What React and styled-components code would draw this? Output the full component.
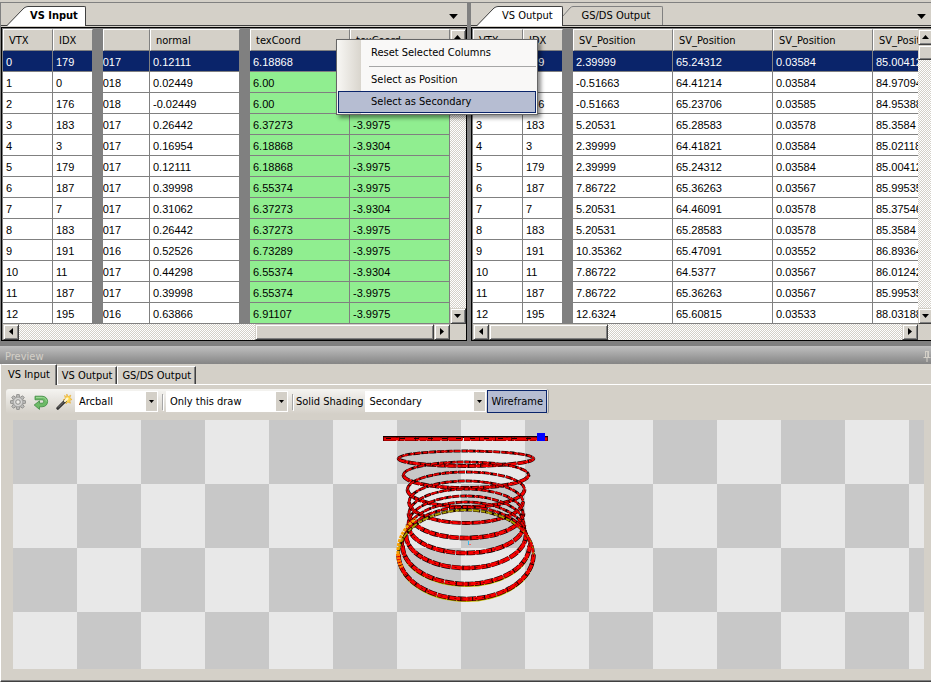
import React from "react";
import styled, { createGlobalStyle, css } from "styled-components";

const UI_FONT = '"DejaVu Sans Condensed", "DejaVu Sans", sans-serif';
const GRID_FONT = '"Liberation Sans", Arial, sans-serif';

const face = "#d4d0c8";
const shadow = "#808080";
const navy = "#0a246a";

const GlobalStyle = createGlobalStyle`
  *, *::before, *::after { box-sizing: border-box; }
  body { margin: 0; background: ${face}; overflow: hidden; }
  button, select { font: inherit; color: inherit; margin: 0; }
`;

const Page = styled.div`
  display: flex;
  flex-direction: column;
  min-height: 100vh;
  padding-top: 2px;
  overflow: hidden;
  background: ${face};
  color: #000;
  font-family: ${UI_FONT};
  font-size: 11px;
  line-height: 14px;
`;

const Docks = styled.div`
  display: grid;
  grid-template-columns: minmax(0, 467fr) minmax(0, 464fr);
  column-gap: 4px;
  width: calc(100% + 4px);
  border-top: 1px solid ${shadow};
  background: ${shadow};
`;

const Dock = styled.section`
  position: relative;
  display: flex;
  flex-direction: column;
  min-width: 0;
  padding-left: ${(p) => (p.$inset ? "1px" : "0")};
`;

const TabStrip = styled.div`
  display: flex;
  align-items: flex-end;
  height: 24px;
  padding: 0 9px 1px 6px;
  background: linear-gradient(#404040, #404040) 0 22px / 100% 1px no-repeat, ${face};
`;

const DocTab = styled.button`
  display: flex;
  padding: 0;
  border: 0;
  background: none;
  font-weight: ${(p) => (p.$bold ? "bold" : "normal")};
  margin-bottom: ${(p) => (p.$active ? "0" : "1px")};
  height: ${(p) => (p.$active ? "20px" : "19px")};
`;

const DocTabBody = styled.span`
  height: 100%;
  padding: 2px ${(p) => (p.$active ? (p.$bold ? "7px" : "9px") : "12px")} 0 ${(p) => (p.$active ? (p.$bold ? "2px" : "4px") : "9px")};
  border-top: 1px solid ${(p) => (p.$active ? "#404040" : shadow)};
  border-right: 1px solid ${(p) => (p.$active ? "#404040" : shadow)};
  border-top-right-radius: 2px;
  background: ${(p) => (p.$active ? "#fff" : face)};
  white-space: nowrap;
`;

const TabListButton = styled.button`
  display: flex;
  align-self: center;
  margin-left: auto;
  padding: 3px 0 0;
  border: 0;
  background: none;
`;

const GridFrame = styled.div`
  display: grid;
  grid-template-columns: minmax(0, 1fr) 16px;
  border: 1px solid #000;
  background: ${shadow};
  padding: 1px 0 0 1px;
`;

const GridView = styled.div`
  overflow: hidden;
`;

const DataTable = styled.table`
  width: ${(p) => p.$width}px;
  table-layout: fixed;
  border-collapse: separate;
  border-spacing: 0;
`;

const HeadCell = styled.th`
  height: 22px;
  padding: 2px 0 0 5px;
  overflow: hidden;
  border-top: 1px solid #fff;
  border-bottom: 1px solid ${shadow};
  border-left: 1px solid #fff;
  border-right: 1px solid ${shadow};
  background: ${face};
  font-weight: normal;
  text-align: left;
  white-space: nowrap;
  ${(p) => p.$gap && css`
    padding: 0;
    border-color: ${shadow};
    background: ${shadow};
  `}
`;

const Cell = styled.td`
  height: 21px;
  padding: 1px 0 0 3px;
  overflow: hidden;
  border-right: 1px solid ${shadow};
  border-bottom: 1px solid ${shadow};
  background: ${(p) => (p.$selected ? navy : p.$marked ? "#90ee90" : "#fff")};
  color: ${(p) => (p.$selected ? "#fff" : "#000")};
  font-family: ${GRID_FONT};
  font-size: 11px;
  white-space: nowrap;
  ${(p) => p.$gap && css`
    padding: 0;
    background: ${shadow};
  `}
  ${(p) => p.$clipped && css`
    padding-left: 0;
  `}
`;

const Clip = styled.span`
  display: flex;
  justify-content: flex-end;
  width: 18px;
  overflow: hidden;
`;

const track = css`
  background: conic-gradient(#fff 25%, ${face} 0 50%, #fff 0 75%, ${face} 0) 0 0 / 2px 2px;
`;

const VScroll = styled.div`
  display: flex;
  flex-direction: column;
  ${track}
`;

const HScroll = styled.div`
  display: flex;
  height: 16px;
  ${track}
`;

const raised = css`
  border: 1px solid;
  border-color: ${face} #404040 #404040 ${face};
  box-shadow: inset 1px 1px #fff, inset -1px -1px ${shadow};
  background: ${face};
`;

const ScrollButton = styled.button`
  display: flex;
  flex: none;
  align-items: center;
  justify-content: center;
  width: 16px;
  height: 16px;
  padding: 0 1px 1px 0;
  ${raised}
`;

const Thumb = styled.div`
  flex: 0 0 ${(p) => p.$size}px;
  ${raised}
`;

const Space = styled.div`
  flex: 1;
`;

const Corner = styled.div`
  background: ${face};
`;

const Menu = styled.div`
  position: absolute;
  top: 36px;
  right: -71px;
  z-index: 2;
  width: 202px;
  padding: 2px 1px 1px;
  border: 1px solid #666;
  background: linear-gradient(90deg, #f8f7f4, #d9d5cd 24px, #f9f8f7 24px);
  box-shadow: 3px 3px 4px rgba(0, 0, 0, 0.45);
`;

const MenuItem = styled.button`
  display: block;
  width: 100%;
  height: 22px;
  padding: 0 0 1px 32px;
  border: 1px solid ${(p) => (p.$active ? navy : "transparent")};
  background: ${(p) => (p.$active ? "#b6bdd2" : "none")};
  text-align: left;
`;

const MenuRule = styled.div`
  height: 1px;
  margin: 2px 0 2px 31px;
  background: #a6a6a6;
`;

const PreviewTitle = styled.header`
  display: flex;
  align-items: center;
  justify-content: space-between;
  height: 23px;
  padding: 3px 0 0 5px;
  border-top: 5px solid ${shadow};
  background: linear-gradient(#c0c0c0, #858585);
  color: ${face};
`;

const Preview = styled.section`
  display: flex;
  flex: 1;
  flex-direction: column;
  border-left: 1px solid #fff;
  border-bottom: 1px solid #404040;
  box-shadow: inset 0 -1px ${shadow};
  padding-bottom: 12px;
`;

const PreviewTabs = styled.div`
  display: flex;
  align-items: flex-end;
  height: 21px;
  border-bottom: 1px solid #fff;
`;

const PreviewTab = styled.button`
  height: ${(p) => (p.$active ? "21px" : "18px")};
  margin-bottom: ${(p) => (p.$active ? "-1px" : "0")};
  padding: 0 ${(p) => (p.$active ? "6px" : "4px")} 0 ${(p) => (p.$active ? "6px" : "4px")};
  border: 0;
  border-top: 1px solid #fff;
  border-right: 1px solid #404040;
  border-left: 1px solid ${(p) => (p.$active ? face : "#fff")};
  box-shadow: inset -1px 0 ${shadow};
  background: ${face};
  white-space: nowrap;
`;

const Toolbar = styled.div`
  display: flex;
  align-items: center;
  align-self: flex-start;
  height: 25px;
  margin: 4px 0 6px 5px;
  padding-right: 1px;
  border-right: 1px solid #999;
  border-radius: 3px;
  background: linear-gradient(#f5f4f1, ${face});
`;

const ToolButton = styled.button`
  display: flex;
  align-items: center;
  justify-content: center;
  width: 23px;
  height: 22px;
  padding: 0;
  border: 0;
  background: none;
`;

const Field = styled.label`
  display: flex;
  align-items: center;
  height: 22px;
  gap: 2px;
`;

const Combo = styled.span`
  display: grid;
  grid-template-columns: 1fr 11px;
  width: ${(p) => p.$width}px;
  height: 21px;
  padding: 1px 1px 1px 0;
  background: #fff;
`;

const ComboSelect = styled.select`
  grid-area: 1 / 1 / 2 / 3;
  appearance: none;
  width: 100%;
  padding: 0 12px 0 4px;
  border: 0;
  background: none;
`;

const ComboArrow = styled.span`
  grid-area: 1 / 2;
  display: flex;
  align-items: center;
  justify-content: center;
  background: ${face};
  pointer-events: none;
`;

const Divider = styled.span`
  width: 1px;
  height: 16px;
  margin: 0 3px 0 4px;
  background: #a6a6a6;
  box-shadow: 1px 1px #fff;
`;

const ToggleButton = styled.button`
  height: 23px;
  margin-left: 1px;
  padding: 0 3px;
  border: 1px solid ${navy};
  background: #b6bdd2;
`;

const Canvas = styled.div`
  display: flex;
  flex: 1;
  justify-content: center;
  min-height: 200px;
  margin: 0 7px 0 12px;
  background: conic-gradient(#e8e8e8 25%, #c8c8c8 0 50%, #e8e8e8 0 75%, #c8c8c8 0) 0 0 / 128px 128px;
`;

const POINTS = {
  up: "0,4 3.5,0 7,4",
  down: "0,0 7,0 3.5,4",
  left: "4,0 4,7 0,3.5",
  right: "0,0 4,3.5 0,7",
};

function Arrow({ dir, size = 7 }) {
  const flat = dir === "up" || dir === "down";
  const thin = size === 5 ? 3 : size === 9 ? 5 : 4;
  return (
    <svg
      width={flat ? size : thin}
      height={flat ? thin : size}
      viewBox={flat ? "0 0 7 4" : "0 0 4 7"}
      aria-hidden="true"
    >
      <polygon points={POINTS[dir]} />
    </svg>
  );
}

function TabSlope({ active }) {
  return active ? (
    <svg width="21" height="20" aria-hidden="true">
      <path d="M0 20 L17 2 Q19 0 21 0 V20Z" fill="#fff" />
      <path d="M0 19.5 L17 2 Q19 .5 21 .5" fill="none" stroke="#404040" />
    </svg>
  ) : (
    <svg width="10" height="19" aria-hidden="true">
      <path d="M0 10 L7 2 Q8.5 .5 10 .5" fill="none" stroke={shadow} />
    </svg>
  );
}

function DocumentTab({ children, active, bold }) {
  return (
    <DocTab type="button" $active={active} $bold={bold}>
      <TabSlope active={active} />
      <DocTabBody $active={active} $bold={bold}>{children}</DocTabBody>
    </DocTab>
  );
}

const GAP = "gap";

const inputColumns = [
  { label: "VTX", width: 50 },
  { label: "IDX", width: 40 },
  { kind: GAP, width: 10 },
  { label: "", width: 47, kind: "clipped" },
  { label: "normal", width: 90 },
  { kind: GAP, width: 10 },
  { label: "texCoord", width: 100, kind: "marked" },
  { label: "texCoord", width: 100, kind: "marked" },
];

const outputColumns = [
  { label: "VTX", width: 50 },
  { label: "IDX", width: 40 },
  { kind: GAP, width: 10 },
  { label: "SV_Position", width: 100 },
  { label: "SV_Position", width: 100 },
  { label: "SV_Position", width: 100 },
  { label: "SV_Position", width: 100 },
];

const inputRows = [
  ["0", "179", "017", "0.12111", "6.18868", "-3.9975"],
  ["1", "0", "018", "0.02449", "6.00", "-3.9304"],
  ["2", "176", "-018", "-0.02449", "6.00", "-3.9975"],
  ["3", "183", "017", "0.26442", "6.37273", "-3.9975"],
  ["4", "3", "017", "0.16954", "6.18868", "-3.9304"],
  ["5", "179", "017", "0.12111", "6.18868", "-3.9975"],
  ["6", "187", "017", "0.39998", "6.55374", "-3.9975"],
  ["7", "7", "017", "0.31062", "6.37273", "-3.9304"],
  ["8", "183", "017", "0.26442", "6.37273", "-3.9975"],
  ["9", "191", "016", "0.52526", "6.73289", "-3.9975"],
  ["10", "11", "017", "0.44298", "6.55374", "-3.9304"],
  ["11", "187", "017", "0.39998", "6.55374", "-3.9975"],
  ["12", "195", "016", "0.63866", "6.91107", "-3.9975"],
];

const outputRows = [
  ["0", "179", "2.39999", "65.24312", "0.03584", "85.00412"],
  ["1", "0", "-0.51663", "64.41214", "0.03584", "84.97094"],
  ["2", "176", "-0.51663", "65.23706", "0.03585", "84.95388"],
  ["3", "183", "5.20531", "65.28583", "0.03578", "85.3584"],
  ["4", "3", "2.39999", "64.41821", "0.03584", "85.02118"],
  ["5", "179", "2.39999", "65.24312", "0.03584", "85.00412"],
  ["6", "187", "7.86722", "65.36263", "0.03567", "85.99535"],
  ["7", "7", "5.20531", "64.46091", "0.03578", "85.37546"],
  ["8", "183", "5.20531", "65.28583", "0.03578", "85.3584"],
  ["9", "191", "10.35362", "65.47091", "0.03552", "86.89364"],
  ["10", "11", "7.86722", "64.5377", "0.03567", "86.01242"],
  ["11", "187", "7.86722", "65.36263", "0.03567", "85.99535"],
  ["12", "195", "12.6324", "65.60815", "0.03533", "88.03188"],
];

function VertexTable({ columns, rows }) {
  const total = columns.reduce((sum, c) => sum + c.width, 0);
  return (
    <DataTable $width={total}>
      <colgroup>
        {columns.map((c, i) => (
          <col key={i} width={c.width} />
        ))}
      </colgroup>
      <thead>
        <tr>
          {columns.map((c, i) => (
            <HeadCell key={i} $gap={c.kind === GAP}>{c.label}</HeadCell>
          ))}
        </tr>
      </thead>
      <tbody>
        {rows.map((row, r) => {
          let next = 0;
          return (
            <tr key={r}>
              {columns.map((c, i) => {
                if (c.kind === GAP) return <Cell key={i} $gap />;
                const value = row[next++];
                return (
                  <Cell
                    key={i}
                    $selected={r === 0}
                    $marked={c.kind === "marked"}
                    $clipped={c.kind === "clipped"}
                  >
                    {c.kind === "clipped" ? <Clip>{value}</Clip> : value}
                  </Cell>
                );
              })}
            </tr>
          );
        })}
      </tbody>
    </DataTable>
  );
}

function VertexGrid({ columns, rows, thumb, atEnd }) {
  return (
    <GridFrame>
      <GridView>
        <VertexTable columns={columns} rows={rows} />
      </GridView>
      <VScroll>
        <ScrollButton type="button" aria-label="Scroll up"><Arrow dir="up" /></ScrollButton>
        <Thumb $size={15} />
        <Space />
        <ScrollButton type="button" aria-label="Scroll down"><Arrow dir="down" /></ScrollButton>
      </VScroll>
      <HScroll>
        <ScrollButton type="button" aria-label="Scroll left"><Arrow dir="left" /></ScrollButton>
        {atEnd && <Space />}
        <Thumb $size={thumb} />
        {!atEnd && <Space />}
        <ScrollButton type="button" aria-label="Scroll right"><Arrow dir="right" /></ScrollButton>
      </HScroll>
      <Corner />
    </GridFrame>
  );
}

function GearIcon() {
  const teeth = [0, 45, 90, 135, 180, 225, 270, 315];
  return (
    <svg width="16" height="16" viewBox="0 0 16 16" aria-hidden="true">
      {teeth.map((a) => (
        <path key={a} d="M6.3 3.5 L6.8 .4 H9.2 L9.7 3.5Z" fill="#bcbcba" stroke="#858583" strokeWidth=".8" transform={`rotate(${a} 8 8)`} />
      ))}
      <circle cx="8" cy="8" r="5" fill="#bcbcba" stroke="#a0a09e" strokeWidth=".7" />
      <circle cx="8" cy="8" r="3.5" fill="none" stroke="#dededc" />
      <circle cx="8" cy="8" r="2.2" fill="#eeede9" stroke="#858583" strokeWidth=".8" />
    </svg>
  );
}

function ReturnIcon() {
  return (
    <svg width="16" height="16" viewBox="0 0 16 16" aria-hidden="true">
      <path d="M2 2.2 H9 C16.5 2.2 16.5 12.8 9 12.8 H6.5 V15.4 L1.2 11 L6.5 6.8 V9.2 H9 C11.2 9.2 11.2 5.8 9 5.8 H2Z" fill="#6dbb67" stroke="#3f8c43" strokeWidth=".8" strokeLinejoin="round" />
      <path d="M3 3.5 H9.5 C12 3.5 13.4 5.5 13.4 7.3" fill="none" stroke="#a9dda2" strokeWidth=".8" />
    </svg>
  );
}

function WandIcon() {
  return (
    <svg width="16" height="16" viewBox="0 0 16 16" aria-hidden="true">
      <path d="M10.8 0 L12 2.7 L14.8 1.2 L13.8 4 L16 5.5 L13.7 6.5 L14.5 9.2 L11.8 8 L10 10 L9.6 7 L7 5.8 L9.5 4.6 L8.5 1.5 L10.7 3Z" fill="#ffd951" stroke="#e7a92b" strokeWidth=".6" />
      <path d="M1.8 14.3 L9.5 6.6" stroke="#333" strokeWidth="3" strokeLinecap="round" />
      <path d="M2 13.6 L7.5 8.1" stroke="#8b8b8b" strokeWidth=".8" />
      <path d="M9 7 L11.3 4.7" stroke="#fff6cc" strokeWidth="2.4" strokeLinecap="round" />
    </svg>
  );
}

function PinIcon() {
  return (
    <svg width="8" height="11" viewBox="0 0 8 11" aria-hidden="true">
      <path d="M2 .5 H6 M2.5 .5 V6.5 M5.5 .5 V6.5 M4.8 .5 V6.5 M.5 6.5 H7.5 M4 6.5 V11" fill="none" stroke={face} />
    </svg>
  );
}

const rings = [
  { top: 31, bottom: 46, r: 67.5 },
  { top: 42, bottom: 68, r: 62.5 },
  { top: 52, bottom: 87, r: 58.5 },
  { top: 61, bottom: 103, r: 57 },
  { top: 69, bottom: 118, r: 57 },
  { top: 76, bottom: 133, r: 58 },
  { top: 82, bottom: 148, r: 60 },
  { top: 87, bottom: 164, r: 63.5 },
  { top: 90, bottom: 179, r: 67.5 },
];

function Coil() {
  const cx = 88;
  return (
    <svg width="181" height="190" viewBox="0 0 181 190" role="img" aria-label="Wireframe coil">
      {rings.map(({ top, bottom, r }, i) => {
        const cy = (top + bottom) / 2;
        const ry = (bottom - top) / 2;
        const back = `M${cx - r} ${cy} A${r} ${ry} 0 0 1 ${cx + r} ${cy}`;
        const front = `M${cx - r} ${cy} A${r} ${ry} 0 0 0 ${cx + r} ${cy}`;
        const lower = i > 6;
        const last = i === 8;
        return (
          <g key={top} fill="none">
            {lower && <path d={front} stroke="#c9b800" strokeWidth="2" transform="translate(0 2)" />}
            <path d={back} stroke="#1c0000" strokeWidth="2.8" strokeDasharray="7 1" />
            <path d={back} stroke={last ? "#a8a000" : "#e60000"} strokeWidth="1.8" strokeDasharray="4 1 6 2" />
            <path d={front} stroke="#160000" strokeWidth={i > 3 ? 4.6 : 3.8} strokeDasharray="9 1" />
            <path d={front} stroke="#fa0000" strokeWidth={i > 3 ? 3.4 : 2.6} strokeDasharray="11 1" />
            <path d={front} stroke="#300000" strokeWidth=".7" strokeDasharray="2 5" />
          </g>
        );
      })}
      <path d="M137 104 C147 110 155 122 155 134" fill="none" stroke="#e80000" strokeWidth="2.4" strokeDasharray="5 1" />
      <path d="M20 134 C19 119 27 106 38 99" fill="none" stroke="#f5a000" strokeWidth="3" strokeDasharray="3 1" />
      <path d="M20 134 C20 140 22 144 24 148" fill="none" stroke="#ff8000" strokeWidth="4" strokeDasharray="2 1" />
      <path d="M5 17 H170" stroke="#100000" strokeWidth="2" />
      <path d="M5 19 H170" stroke="#600000" strokeWidth="4" strokeDasharray="13 2 6 1" />
      <path d="M6 19 H169" stroke="#f00000" strokeWidth="3" strokeDasharray="15 1" />
      <path d="M8 18.5 H166" stroke="#200000" strokeWidth="1" strokeDasharray="5 9" />
      <rect x="159" y="13" width="8" height="8" fill="#00f" />
      <path d="M90.5 121 V125" stroke="#36bdf0" />
      <path d="M91 124.5 H93" stroke="#f66" />
    </svg>
  );
}

function ComboBox({ label, value, width, showLabel }) {
  return (
    <Field>
      {showLabel && label}
      <Combo $width={width}>
        <ComboSelect defaultValue={value} aria-label={label}>
          <option>{value}</option>
        </ComboSelect>
        <ComboArrow><Arrow dir="down" size={5} /></ComboArrow>
      </Combo>
    </Field>
  );
}

export default function App() {
  return (
    <Page>
      <GlobalStyle />
      <Docks>
        <Dock $inset>
          <TabStrip>
            <DocumentTab active bold>VS Input</DocumentTab>
            <TabListButton type="button" aria-label="Tab list"><Arrow dir="down" size={9} /></TabListButton>
          </TabStrip>
          <VertexGrid columns={inputColumns} rows={inputRows} thumb={179} atEnd />
          <Menu role="menu">
            <MenuItem type="button" role="menuitem">Reset Selected Columns</MenuItem>
            <MenuRule />
            <MenuItem type="button" role="menuitem">Select as Position</MenuItem>
            <MenuItem type="button" role="menuitem" $active>Select as Secondary</MenuItem>
          </Menu>
        </Dock>
        <Dock>
          <TabStrip>
            <DocumentTab active>VS Output</DocumentTab>
            <DocumentTab>GS/DS Output</DocumentTab>
            <TabListButton type="button" aria-label="Tab list"><Arrow dir="down" size={9} /></TabListButton>
          </TabStrip>
          <VertexGrid columns={outputColumns} rows={outputRows} thumb={119} />
        </Dock>
      </Docks>
      <PreviewTitle>
        Preview
        <PinIcon />
      </PreviewTitle>
      <Preview>
        <PreviewTabs>
          <PreviewTab type="button" $active>VS Input</PreviewTab>
          <PreviewTab type="button">VS Output</PreviewTab>
          <PreviewTab type="button">GS/DS Output</PreviewTab>
        </PreviewTabs>
        <Toolbar>
          <ToolButton type="button" aria-label="Settings"><GearIcon /></ToolButton>
          <ToolButton type="button" aria-label="Reset view"><ReturnIcon /></ToolButton>
          <ToolButton type="button" aria-label="Auto fit"><WandIcon /></ToolButton>
          <ComboBox label="Camera" value="Arcball" width={83} />
          <Divider />
          <ComboBox label="Draw range" value="Only this draw" width={122} />
          <Divider />
          <ComboBox label="Solid Shading" value="Secondary" width={121} showLabel />
          <ToggleButton type="button" aria-pressed="true">Wireframe</ToggleButton>
        </Toolbar>
        <Canvas>
          <Coil />
        </Canvas>
      </Preview>
    </Page>
  );
}
